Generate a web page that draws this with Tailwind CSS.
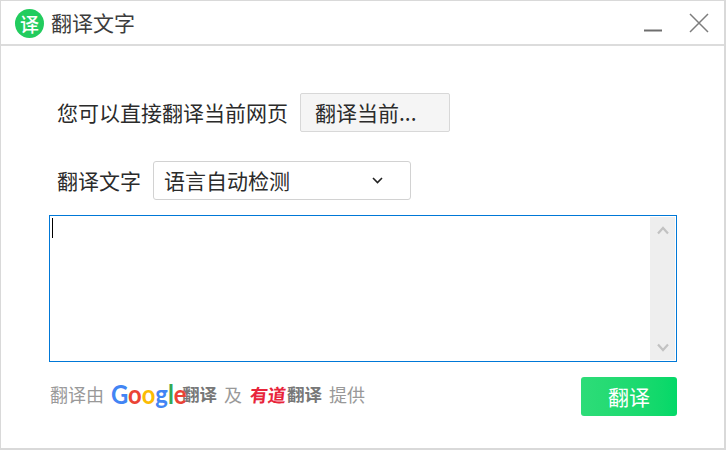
<!DOCTYPE html>
<html lang="zh-CN">
<head>
  <meta charset="UTF-8" />
  <title>翻译文字</title>
  <script src="https://cdn.jsdelivr.net/npm/@tailwindcss/browser@4"></script>
</head>
<body class="bg-white font-['Noto_Sans_CJK_SC','Noto_Sans',sans-serif]">
  <div class="w-[726px] h-[450px] flex flex-col border-2 border-t border-l border-[#d9d9d9] bg-white overflow-hidden">
    <!-- title bar -->
    <header class="h-[45px] shrink-0 flex items-center border-b-2 border-[#dcdcdc] pl-[14px] pr-[15px]">
      <div class="mt-px w-[29px] h-[29px] rounded-full bg-[#22cc5e] flex items-center justify-center text-white text-[19px] font-medium leading-none">译</div>
      <h1 class="ml-[7px] text-[21px] leading-none text-[#3c3c3c]">翻译文字</h1>
      <div class="ml-auto flex items-center gap-[26px]">
        <svg width="20" height="22" viewBox="0 0 20 22"><path d="M1 18.5h18" stroke="#6e6e6e" stroke-width="2" /></svg>
        <svg width="20" height="20" viewBox="0 0 20 20" fill="none"><path d="M1 1l18 18M19 1L1 19" stroke="#7d7d7d" stroke-width="1.5" /></svg>
      </div>
    </header>

    <main class="flex-1 flex flex-col pl-[48px] pr-[47px]">
      <div class="mt-[47px] ml-[8px] flex items-center">
        <span class="text-[21px] leading-none text-[#2b2b2b]">您可以直接翻译当前网页</span>
        <button class="ml-[12px] w-[150px] h-[39px] pl-[14px] text-left bg-[#f5f5f5] border border-[#d8d8d8] rounded-[2px] text-[21px] leading-none text-[#2b2b2b]">翻译当前...</button>
      </div>

      <div class="mt-[29px] ml-[8px] flex items-center">
        <span class="text-[21px] leading-none text-[#2b2b2b]">翻译文字</span>
        <div class="ml-[12px] w-[258px] h-[39px] pl-[10px] pr-[27px] flex items-center justify-between bg-white border border-[#d2d2d2] rounded-[3px]">
          <span class="text-[21px] leading-none text-[#2b2b2b]">语言自动检测</span>
          <svg width="11" height="7" viewBox="0 0 11 7" fill="none"><path d="M1 1l4.5 4.5L10 1" stroke="#222222" stroke-width="1.6" /></svg>
        </div>
      </div>

      <div class="mt-[15px] h-[147px] flex border border-[#0078d7] p-px">
        <div class="flex-1 relative">
          <div class="absolute left-[1px] top-[1px] w-px h-[20px] bg-black"></div>
        </div>
        <div class="w-[25px] bg-[#eeeeee] flex flex-col items-center justify-between pt-[9px] pb-[8px]">
          <svg width="12" height="9" viewBox="0 0 12 9" fill="none"><path d="M1 7.5l5-5.5 5 5.5" stroke="#c2c2c2" stroke-width="2.2" /></svg>
          <svg width="12" height="9" viewBox="0 0 12 9" fill="none"><path d="M1 1.5l5 5.5 5-5.5" stroke="#c2c2c2" stroke-width="2.2" /></svg>
        </div>
      </div>

      <footer class="mt-[15px] flex items-center">
        <div class="flex items-center -translate-y-[3px] ml-px">
          <span class="text-[18px] leading-none text-[#999999]">翻译由</span>
          <span class="ml-[7px] w-[70px] block font-['Lato',sans-serif] font-bold text-[27px] leading-none scale-x-[0.88] origin-left whitespace-nowrap">
            <span class="text-[#4285f4]">G</span><span class="text-[#ea4335]">o</span><span class="text-[#fbbc05]">o</span><span class="text-[#4285f4]">g</span><span class="text-[#34a853]">l</span><span class="text-[#ea4335]">e</span>
          </span>
          <span class="ml-px text-[17.5px] leading-none font-bold text-[#777777]">翻译</span>
          <span class="ml-[7px] text-[18px] leading-none text-[#999999]">及</span>
          <span class="ml-[8px] text-[18px] leading-none font-bold -skew-x-6 text-[#e8243a]">有道</span>
          <span class="ml-px text-[17.5px] leading-none font-bold text-[#777777]">翻译</span>
          <span class="ml-[7px] text-[18px] leading-none text-[#999999]">提供</span>
        </div>
        <button class="ml-auto w-[96px] h-[39px] rounded-[3px] bg-linear-to-r from-[#2ddc78] to-[#03d868] text-white text-[21px] leading-none">翻译</button>
      </footer>
    </main>
  </div>
</body>
</html>
